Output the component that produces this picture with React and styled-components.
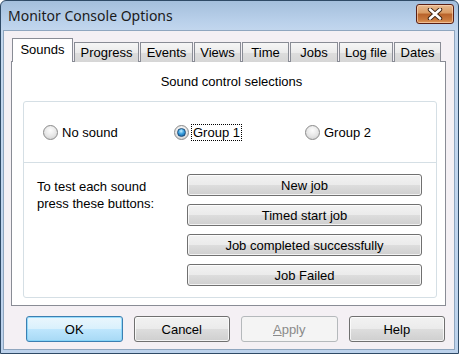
import React from 'react';
import styled, { createGlobalStyle } from 'styled-components';

const GlobalStyle = createGlobalStyle`
  html, body {
    margin: 0;
    padding: 0;
    background: #ffffff;
  }
  body {
    font-family: "Liberation Sans", Arial, sans-serif;
    font-size: 13px;
    color: #000;
  }
`;

const tabs = [
  { label: 'Sounds', width: 61 },
  { label: 'Progress', width: 65 },
  { label: 'Events', width: 53 },
  { label: 'Views', width: 47 },
  { label: 'Time', width: 47 },
  { label: 'Jobs', width: 48 },
  { label: 'Log file', width: 54 },
  { label: 'Dates', width: 47 },
];

const testButtons = ['New job', 'Timed start job', 'Job completed successfully', 'Job Failed'];

function Radio({ label, checked, focused }) {
  return (
    <RadioItem>
      <RadioCircle checked={checked}>{checked && <RadioDot />}</RadioCircle>
      <RadioLabel focused={focused}>{label}</RadioLabel>
    </RadioItem>
  );
}

function App() {
  return (
    <>
      <GlobalStyle />
      <Window>
        <TitleBar>
          <Title>Monitor Console Options</Title>
          <CloseButton>
            <svg width="16" height="12" viewBox="0 0 16 12">
              <path d="M3 1.5 L13 10.5 M13 1.5 L3 10.5" stroke="#3a2010" strokeWidth="4.4" strokeLinecap="round" />
              <path d="M3 1.5 L13 10.5 M13 1.5 L3 10.5" stroke="#ffffff" strokeWidth="2.6" strokeLinecap="round" />
            </svg>
          </CloseButton>
        </TitleBar>
        <Client>
          <TabStrip>
            {tabs.map((t, i) => (
              <Tab key={t.label} width={t.width} active={i === 0}>
                {t.label}
              </Tab>
            ))}
          </TabStrip>
          <Panel>
            <Heading>Sound control selections</Heading>
            <GroupBox>
              <RadioRow>
                <Radio label="No sound" />
                <Radio label="Group 1" checked focused />
                <Radio label="Group 2" />
              </RadioRow>
              <TestSection>
                <TestHint>
                  To test each sound
                  <br />
                  press these buttons:
                </TestHint>
                <TestButtons>
                  {testButtons.map((b) => (
                    <PushButton key={b} height={22}>
                      {b}
                    </PushButton>
                  ))}
                </TestButtons>
              </TestSection>
            </GroupBox>
          </Panel>
          <ButtonBar>
            <PushButton height={26} isDefault>
              OK
            </PushButton>
            <PushButton height={26}>Cancel</PushButton>
            <PushButton height={26} disabled>
              <u>A</u>pply
            </PushButton>
            <PushButton height={26}>Help</PushButton>
          </ButtonBar>
        </Client>
      </Window>
    </>
  );
}

const Window = styled.div`
  width: 459px;
  height: 354px;
  box-sizing: border-box;
  display: flex;
  flex-direction: column;
  border: 1px solid #2f4a66;
  border-radius: 6px 6px 0 0;
  background: linear-gradient(to bottom, #a4bfdc 0px, #b9d0ea 20px, #c3d7ee 30px, #bcd2ec 100%);
  overflow: hidden;
`;

const TitleBar = styled.div`
  height: 29px;
  flex: none;
  display: flex;
  align-items: center;
  justify-content: space-between;
  padding: 0 4px 0 7px;
`;

const Title = styled.div`
  font-family: "Noto Sans", "Open Sans", sans-serif;
  font-size: 14px;
  color: #1a1a1a;
  margin-top: -1px;
`;

const CloseButton = styled.div`
  width: 38px;
  height: 20px;
  box-sizing: border-box;
  margin-top: -4px;
  border: 1px solid #5a1f14;
  border-radius: 3px;
  display: flex;
  align-items: center;
  justify-content: center;
  background: linear-gradient(to bottom, #e7b990 0%, #d99a62 45%, #b8622a 50%, #c8783c 80%, #e09a5c 100%);
  box-shadow: inset 0 0 0 1px rgba(255, 220, 190, 0.6);
`;

const Client = styled.div`
  flex: 1;
  margin: 0 3px 3px 2px;
  border: 1px solid #8fa6bf;
  background: #f4f0f4;
  display: flex;
  flex-direction: column;
  padding: 7px 9px 0 7px;
`;

const TabStrip = styled.div`
  display: flex;
  align-items: flex-end;
  height: 24px;
  padding-left: 1px;
  position: relative;
  z-index: 1;
`;

const Tab = styled.div`
  width: ${(p) => p.width}px;
  box-sizing: border-box;
  height: ${(p) => (p.active ? 24 : 20)}px;
  margin-right: 1px;
  border: 1px solid #898c95;
  border-bottom: none;
  display: flex;
  align-items: center;
  justify-content: center;
  padding-bottom: ${(p) => (p.active ? 3 : 0)}px;
  background: ${(p) => (p.active ? '#ffffff' : 'linear-gradient(to bottom, #f6f6f6 0%, #ebebeb 50%, #dddddd 51%, #d6d6d6 100%)')};
  font-size: 13px;
  white-space: nowrap;
`;

const Panel = styled.div`
  width: 435px;
  height: 245px;
  box-sizing: border-box;
  margin-top: -1px;
  border: 1px solid #898c95;
  background: #ffffff;
  display: flex;
  flex-direction: column;
  padding: 12px 8px 0 11px;
`;

const Heading = styled.div`
  text-align: center;
  line-height: 16px;
  height: 16px;
  margin-left: 3px;
`;

const GroupBox = styled.div`
  margin-top: 11px;
  height: 197px;
  box-sizing: border-box;
  border: 1px solid #d5dfe5;
  border-radius: 3px;
  display: flex;
  flex-direction: column;
`;

const RadioRow = styled.div`
  height: 60px;
  flex: none;
  display: flex;
  align-items: center;
  padding-left: 19px;
  border-bottom: 1px solid #d5dfe5;
`;

const RadioItem = styled.div`
  width: 136px;
  display: flex;
  align-items: center;
`;

const RadioCircle = styled.div`
  width: 15px;
  height: 15px;
  box-sizing: border-box;
  border-radius: 50%;
  border: 1px solid #8a8a8a;
  background: radial-gradient(circle at 50% 35%, #fdfdfd 0%, #e6e6e6 55%, #c8c8c8 100%);
  display: flex;
  align-items: center;
  justify-content: center;
  flex: none;
  margin-right: 2px;
`;

const RadioDot = styled.div`
  width: 9px;
  height: 9px;
  border-radius: 50%;
  box-sizing: border-box;
  border: 1px solid #1c4d7a;
  background: radial-gradient(circle at 45% 30%, #c6f0ff 0%, #3aa0e0 45%, #0b4e8c 100%);
`;

const RadioLabel = styled.span`
  padding: 0 1px;
  line-height: 15px;
  border: 1px dotted ${(p) => (p.focused ? '#000' : 'transparent')};
`;

const TestSection = styled.div`
  flex: 1;
  display: flex;
  justify-content: space-between;
  padding: 11px 14px 0 13px;
`;

const TestHint = styled.div`
  line-height: 17px;
  padding-top: 4px;
`;

const TestButtons = styled.div`
  width: 235px;
  display: flex;
  flex-direction: column;
  gap: 8px;
`;

const PushButton = styled.div`
  height: ${(p) => p.height}px;
  width: ${(p) => (p.height > 22 ? '97px' : 'auto')};
  box-sizing: border-box;
  border: 1px solid ${(p) => (p.isDefault ? '#3c7fb1' : p.disabled ? '#b5b9bc' : '#707070')};
  border-radius: 3px;
  display: flex;
  align-items: center;
  justify-content: center;
  font-size: 13px;
  color: ${(p) => (p.disabled ? '#8a8a8a' : '#000')};
  background: ${(p) =>
    p.isDefault
      ? 'linear-gradient(to bottom, #eaf6fd 0%, #d9f0fc 50%, #bee6fd 51%, #a7d9f5 100%)'
      : p.disabled
      ? '#f4f4f4'
      : 'linear-gradient(to bottom, #f2f2f2 0%, #ebebeb 50%, #dddddd 51%, #cfcfcf 100%)'};
  box-shadow: inset 0 0 0 1px ${(p) => (p.isDefault ? 'rgba(120, 210, 250, 0.7)' : p.disabled ? 'transparent' : 'rgba(255,255,255,0.75)')};
`;

const ButtonBar = styled.div`
  display: flex;
  gap: 11px;
  padding: 10px 0 0 15px;
`;

export default App;
